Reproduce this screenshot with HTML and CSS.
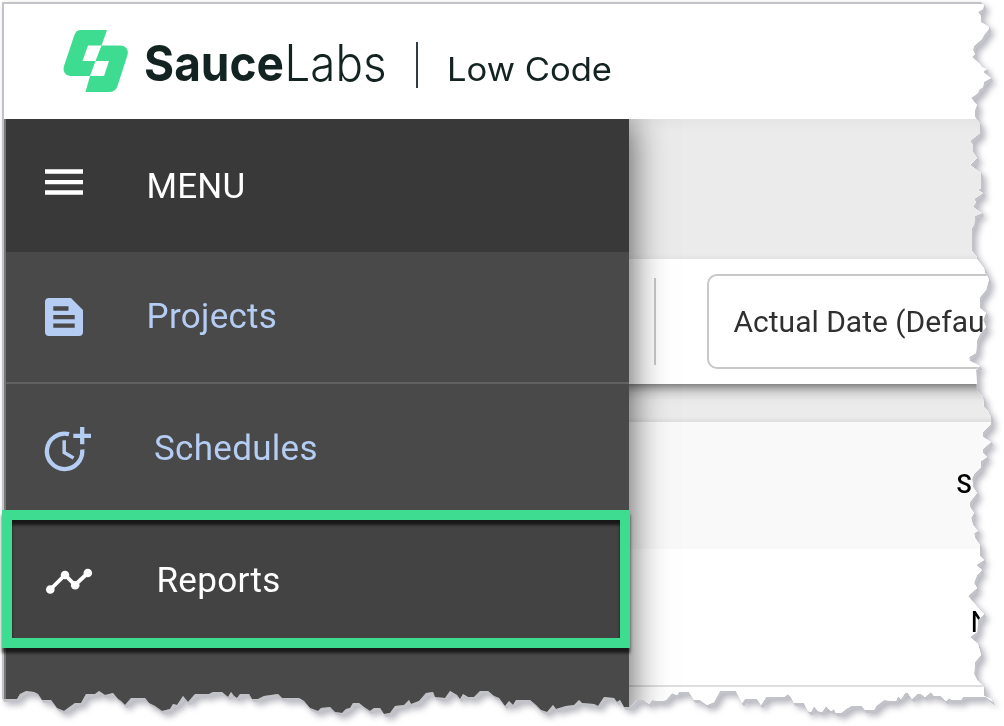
FILE: index.html
```html
<!DOCTYPE html>
<html lang="en">
<head>
<meta charset="utf-8">
<title>Sauce Labs Low Code</title>
<link rel="stylesheet" href="styles.css">
</head>
<body>
<div class="paper">
  <div class="sheet">
    <header class="topbar">
      <svg class="mark" viewBox="0 0 66 64" width="66" height="64" aria-hidden="true">
        <path fill="#3ddc91" d="M17 1H44L38.500 16.500H25L19.500 32H32.500L27 47H8C2 47 -.5 42 1 37L11 7Q13 1 17 1Z"/>
        <path fill="#3ddc91" d="M38.500 16.500H57C63 16.500 66 21 64.500 26L54.500 57Q52.500 63 46 63H22.500L27 47H41L46 32H32.500Z"/>
      </svg>
      <svg class="wordmark" viewBox="0 0 480 117" width="480" height="117">
        <text class="brand-bold" x="1" y="78.500" textLength="140" lengthAdjust="spacingAndGlyphs">Sauce</text>
        <text class="brand-light" x="141.500" y="78.500" textLength="102" lengthAdjust="spacingAndGlyphs">Labs</text>
        <rect x="273" y="40" width="2" height="46" fill="#2e3e40"/>
        <text class="product" x="304" y="78.500" textLength="165" lengthAdjust="spacingAndGlyphs">Low Code</text>
      </svg>
    </header>
    <div class="body">
      <nav class="sidebar">
        <div class="item menu">
          <svg class="icon" viewBox="0 0 50 50" width="50" height="50"><path fill="#fff" d="M1 11.300h38v4.500H1zM1 22h38v4.300H1zM1 32.300h38v4.500H1z"/></svg>
          <span>MENU</span>
        </div>
        <div class="item projects">
          <svg class="icon" viewBox="0 0 50 50" width="50" height="50"><path fill="#b5ccf3" fill-rule="evenodd" d="M5 6H27L39 18V40a4 4 0 0 1-4 4H5a4 4 0 0 1-4-4V10a4 4 0 0 1 4-4ZM9.300 14.300v4.500H24.500v-4.500ZM9.300 23v4.300H30.700V23ZM9.300 31.500v4.300H30.700v-4.300Z"/></svg>
          <span>Projects</span>
        </div>
        <div class="item schedules">
          <svg class="icon" viewBox="0 0 50 50" width="50" height="50"><g fill="none" stroke="#b5ccf3" transform="translate(0 1)"><path stroke-width="4.300" d="M25 8.200A17.700 17.700 0 1 0 38.200 23.500M29.300 9.800H47M38.200 1V18.300"/><path stroke-width="3.500" d="M20.200 14.300V26.500L29.600 32"/></g></svg>
          <span>Schedules</span>
        </div>
        <div class="item reports">
          <svg class="icon" viewBox="0 0 50 50" width="50" height="50"><path fill="none" stroke="#fff" stroke-width="3.800" d="M6.300 33.500L21 19L31 29L43.800 17"/><g fill="#fff"><circle cx="6.300" cy="33.500" r="4.300"/><circle cx="21" cy="19" r="4.300"/><circle cx="31.200" cy="29.300" r="4.300"/><circle cx="43.800" cy="17" r="4.300"/></g></svg>
          <span>Reports</span>
        </div>
      </nav>
      <main class="content">
        <div class="band"></div>
        <div class="toolbar">
          <div class="divider"></div>
          <div class="select">Actual Date (Default)</div>
        </div>
        <div class="gap"></div>
        <div class="thead">S</div>
        <div class="row">N</div>
        <div class="row next"></div>
      </main>
    </div>
  </div>
</div>
<div class="highlight"></div>
</body>
</html>
```
FILE: styles.css
```css
* { box-sizing: border-box; }
body { margin: 0; width: 1004px; height: 726px; overflow: hidden; background: #fff; position: relative; font-family: Roboto, "Liberation Sans", sans-serif; }

.paper { filter: drop-shadow(1px 1px 0 #c2c3c8) drop-shadow(1px 2px 0 #c2c3c8) drop-shadow(3px 3px 3px rgba(90, 92, 110, .45)); }

/* torn edge along the right and bottom sides */
.sheet {
  width: 1004px; height: 726px; padding: 2px 0 0 2px; overflow: hidden;
  background: #fff;
  clip-path: polygon(2px 2px, 981px 2px, 984px 5px, 983px 9px, 978px 12px, 981px 16px, 981px 22px, 989px 27px, 989px 29px, 984px 35px, 982px 39px, 974px 46px, 973px 50px, 975px 54px, 972px 57px, 980px 64px, 982px 67px, 987px 69px, 983px 72px, 991px 78px, 984px 82px, 983px 87px, 979px 90px, 978px 93px, 971px 98px, 977px 105px, 975px 110px, 975px 117px, 980px 124px, 980px 133px, 970px 141px, 973px 145px, 973px 152px, 977px 158px, 970px 165px, 981px 173px, 981px 188px, 978px 190px, 983px 193px, 974px 199px, 976px 202px, 973px 207px, 982px 213px, 975px 216px, 974px 225px, 972px 228px, 972px 251px, 977px 257px, 977px 259px, 984px 268px, 985px 273px, 989px 279px, 986px 290px, 980px 297px, 980px 308px, 986px 313px, 983px 320px, 986px 327px, 980px 334px, 977px 340px, 976px 353px, 969px 357px, 970px 361px, 980px 366px, 976px 370px, 977px 391px, 983px 397px, 984px 407px, 988px 411px, 991px 417px, 991px 424px, 983px 432px, 983px 437px, 991px 442px, 983px 449px, 983px 453px, 987px 457px, 981px 461px, 981px 467px, 974px 474px, 972px 479px, 973px 487px, 977px 493px, 970px 502px, 970px 507px, 974px 513px, 971px 518px, 973px 525px, 978px 531px, 974px 533px, 975px 538px, 980px 545px, 980px 556px, 984px 560px, 976px 565px, 982px 570px, 977px 575px, 974px 583px, 977px 588px, 968px 596px, 973px 602px, 984px 614px, 978px 620px, 977px 632px, 970px 637px, 978px 644px, 981px 655px, 975px 662px, 974px 674px, 977px 680px, 984px 687px, 984px 696px, 991px 699px, 993px 702px,
    986px 697px, 963px 697px, 961px 700px, 952px 700px, 949px 698px, 946px 701px, 941px 696px, 934px 696px, 931px 692px, 925px 697px, 921px 694px, 917px 694px, 912px 699px, 908px 693px, 905px 693px, 901px 699px, 898px 696px, 896px 701px, 884px 700px, 876px 706px, 874px 710px, 865px 710px, 862px 706px, 851px 706px, 846px 709px, 841px 713px, 836px 713px, 834px 709px, 831px 711px, 826px 706px, 822px 712px, 818px 711px, 814px 706px, 811px 712px, 808px 711px, 804px 703px, 794px 703px, 791px 697px, 788px 694px, 784px 697px, 766px 697px, 761px 705px, 757px 699px, 745px 699px, 742px 703px, 736px 691px, 720px 691px, 714px 702px, 707px 705px, 700px 700px, 694px 700px, 689px 692px, 679px 692px, 677px 695px, 672px 693px, 666px 700px,
    661px 701px, 652px 700px, 649px 704px, 644px 700px, 637px 700px, 630px 707px, 624px 707px, 620px 700px, 617px 702px, 614px 698px, 604px 697px, 598px 706px, 594px 704px, 582px 703px, 579px 700px, 574px 705px, 566px 706px, 556px 709px, 553px 705px, 547px 712px, 541px 710px, 536px 705px, 530px 700px, 516px 700px, 513px 705px, 509px 701px, 505px 706px, 499px 698px, 494px 696px, 488px 691px, 480px 691px, 474px 697px, 468px 697px, 463px 694px, 460px 699px, 457px 695px, 450px 691px, 445px 698px, 435px 697px, 433px 692px, 426px 693px, 419px 701px, 411px 704px, 409px 700px, 404px 705px, 395px 706px, 390px 713px, 384px 714px, 380px 708px, 374px 708px, 370px 711px, 364px 707px, 359px 703px, 353px 703px, 350px 708px, 346px 709px, 342px 713px, 335px 712px, 330px 707px,
    321px 708px, 318px 711px, 310px 708px, 304px 701px, 299px 698px, 282px 698px, 278px 694px, 264px 696px, 258px 699px, 252px 699px, 249px 694px, 240px 694px, 237px 698px, 234px 696px, 231px 692px, 228px 697px, 222px 692px, 213px 692px, 209px 694px, 195px 694px, 188px 702px, 183px 696px, 177px 705px, 173px 704px, 170px 709px, 162px 711px, 155px 706px, 149px 703px, 145px 698px, 131px 698px, 125px 705px, 121px 701px, 118px 699px, 113px 693px, 105px 695px, 99px 691px, 95px 694px, 86px 694px, 81px 703px, 75px 703px, 68px 708px, 64px 711px, 57px 708px, 51px 700px, 42px 700px, 38px 694px, 34px 692px, 26px 691px, 20px 694px, 17px 699px, 2px 699px);
}
.topbar { display: flex; align-items: flex-start; height: 117px; border-top: 2px solid #c2c3c8; border-left: 2px solid #c2c3c8; background: #fff; }
.mark { margin: 25px 0 0 59px; flex: none; }
.wordmark { margin-left: 14px; margin-top: -2px; flex: none; fill: #132322; font-family: Inter, sans-serif; }
.brand-bold { font-size: 50px; font-weight: 700; }
.brand-light { font-size: 50px; font-weight: 300; }
.product { font-size: 33px; font-weight: 400; }

.body { display: flex; height: 607px; border-left: 2px solid #c2c3c8; }
.sidebar { width: 625px; flex: none; background: #494949; border-left: 2px solid #777; box-shadow: 2px 0 34px rgba(0, 0, 0, .64); position: relative; z-index: 1; clip-path: inset(0 -60px 0 0); }
.item { display: flex; align-items: center; color: #b5ccf3; font-size: 35px; line-height: 44px; letter-spacing: .3px; padding-left: 38px; }
.icon { flex: none; }
.item span { margin-left: 52.5px; }
.menu { height: 133px; background: #393939; color: #fff; letter-spacing: .2px; padding-bottom: 6px; }
.menu span { padding-top: 8px; }
.projects { height: 132px; border-bottom: 2px solid #616161; }
.schedules { height: 131px; }
.schedules span { margin-left: 60px; padding-bottom: 2px; }
.reports { height: 132px; background: #434343; color: #fff; }
.reports span { margin-left: 62.5px; }

.content { flex: 1; min-width: 0; background: #fff; }
.band { height: 140px; background: linear-gradient(#e4e4e4, #ebebeb 12px, #ebebeb 135px, #e4e4e4); }
.toolbar { height: 125px; background: #fff; display: flex; align-items: flex-start; padding: 15px 0 0 25px; overflow: hidden; }
.divider { width: 2px; height: 87px; margin-top: 4px; background: #c8c8c8; flex: none; }
.select { margin: 0 0 0 51px; width: 400px; flex: none; height: 95px; border: 2px solid #c8c8c8; border-radius: 10px; padding-left: 24.5px; font-size: 30px; line-height: 92px; color: #303030; white-space: nowrap; }
.gap { height: 38px; background: linear-gradient(#858585, #acacac 4px, #d2d2d2 9px, #e8e8e8 16px, #ebebeb 22px, #ebebeb 33px, #dedede); }
.thead { height: 127px; background: #f9f9f9; padding-left: 327.5px; font-size: 25px; font-weight: 500; line-height: 126px; color: #000; }
.row { height: 138px; background: #fff; border-bottom: 2px solid #dfdfdf; padding-left: 341.5px; font-size: 29px; line-height: 146px; color: #000; }
.next { height: 40px; border: 0; }

/* callout around the Reports entry */
.highlight { position: absolute; left: 2px; top: 510px; width: 628px; height: 138px; border: 10px solid #3ddc91; box-shadow: 0 5px 3px rgba(0, 0, 0, .65), inset 0 5px 3px rgba(0, 0, 0, .65); }
```
